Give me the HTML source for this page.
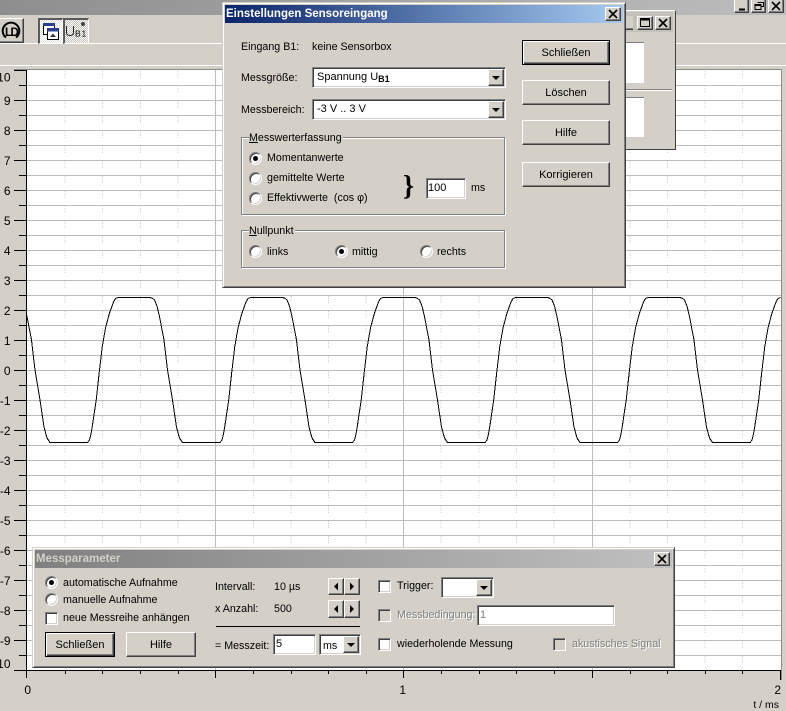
<!DOCTYPE html>
<html><head><meta charset="utf-8">
<style>
html,body{margin:0;padding:0;width:786px;height:711px;overflow:hidden;background:#d4d0c8}
body{position:relative;font-family:"Liberation Sans",sans-serif;font-size:10.7px;color:#000}
.a,.t,.b,.s,.r,.c,.x{position:absolute;box-sizing:border-box}
.t{line-height:14px;white-space:nowrap}
.d{color:#808080;text-shadow:1px 1px 0 #fff}
.b{background:#d4d0c8;border:1px solid;border-color:#fff #404040 #404040 #fff;box-shadow:inset -1px -1px 0 #808080;text-align:center;font-size:11px}
.b.def{border:1px solid #000;box-shadow:inset 1px 1px 0 #fff,inset -1px -1px 0 #404040,inset -2px -2px 0 #808080}
.b span{position:absolute;left:0;right:0;top:50%;margin-top:-7px;line-height:14px}
.s{background:#fff;border:1px solid;border-color:#808080 #fff #fff #808080;box-shadow:inset 1px 1px 0 #404040,inset -1px -1px 0 #d4d0c8}
.r{width:13px;height:13px;border-radius:50%;border:1px solid;border-color:#808080 #fff #fff #808080;background:#fff;box-shadow:inset 1px 1px 0 #404040,inset -1px -1px 0 #d4d0c8}
.r.on{background:radial-gradient(circle at 50% 50%,#000 0 2.2px,#fff 2.8px)}
.c{width:13px;height:13px;border:1px solid;border-color:#808080 #fff #fff #808080;background:#fff;box-shadow:inset 1px 1px 0 #404040,inset -1px -1px 0 #d4d0c8}
.c.dis{background:#d4d0c8}
.g{position:absolute;box-sizing:border-box;border:1px solid #808080;box-shadow:1px 1px 0 #fff,inset 1px 1px 0 #fff}
.l{position:absolute;top:-6px;left:7px;background:#d4d0c8;line-height:12px;padding:0 1px 0 0;white-space:nowrap}
.x svg,.ar svg{position:absolute;left:0;top:0}
.x{background:#d4d0c8;border:1px solid;border-color:#fff #404040 #404040 #fff;box-shadow:inset -1px -1px 0 #808080}
</style></head><body>

<!-- top window strip -->
<div class="a" style="left:0;top:0;width:786px;height:15px;background:linear-gradient(90deg,#8e8e8e,#bdbdbd)"></div>
<div class="a" style="left:0;top:43px;width:786px;height:1px;background:#fff"></div>
<div class="a" style="left:0;top:65px;width:786px;height:1px;background:#fff"></div>

<!-- chart -->
<svg class="a" style="left:0;top:0" width="786" height="711" viewBox="0 0 786 711" shape-rendering="crispEdges">
<defs>
<path id="wave" d="M0 297.5L31.5 297.5L34 298L36.500 300L39 306L41.500 316.700L46 340L49.500 370L54.500 400L58.500 427L61.500 438L64.500 442.500L102 442.500L104 440L105.500 434L106.700 427L110.700 400L114 370L116.700 347L120 328L124 313L128 302L130 298.500L132.500 297.500" fill="none" stroke="#000" stroke-width="1"/>
<clipPath id="cc"><rect x="27" y="70" width="754" height="600"/></clipPath>
</defs>
<rect x="26.5" y="69" width="755.5" height="601" fill="#fff"/>
<path d="M14 69.5H782M781.5 69V680" stroke="#8a8a8a" fill="none"/>
<g stroke="#d0cdc6" stroke-dasharray="1 1 1 1 1 1 1 8">
<path d="M65 71V670M102.500 71V670M140.500 71V670M178 71V670M253.500 71V670M291 71V670M328.500 71V670M366 71V670M441 71V670M479 71V670M516.500 71V670M554 71V670M630 71V670M667.500 71V670M705 71V670M742.500 71V670"/>
</g>
<path stroke="#bdbdbd" fill="none" d="M215.500 70V670M403.500 70V670M592.500 70V670M27 85.500H781M27 100.500H781M27 115.500H781M27 130.500H781M27 145.500H781M27 160.500H781M27 175.500H781M27 190.500H781M27 205.500H781M27 220.500H781M27 235.500H781M27 250.500H781M27 265.500H781M27 280.500H781M27 295.500H781M27 310.500H781M27 325.500H781M27 340.500H781M27 355.500H781M27 370.500H781M27 385.500H781M27 400.500H781M27 415.500H781M27 430.500H781M27 445.500H781M27 460.500H781M27 475.500H781M27 490.500H781M27 505.500H781M27 520.500H781M27 535.500H781M27 550.500H781M27 565.500H781M27 580.500H781M27 595.500H781M27 610.500H781M27 625.500H781M27 640.500H781M27 655.500H781"/>
<g clip-path="url(#cc)">
<use href="#wave" x="-14.500"/><use href="#wave" x="118"/><use href="#wave" x="250.500"/><use href="#wave" x="383"/><use href="#wave" x="515.500"/><use href="#wave" x="648"/>
</g>
<path stroke="#000" fill="none" d="M26.500 70V678M14 70.500H26M19 85.500H26M14 100.500H26M19 115.500H26M14 130.500H26M19 145.500H26M14 160.500H26M19 175.500H26M14 190.500H26M19 205.500H26M14 220.500H26M19 235.500H26M14 250.500H26M19 265.500H26M14 280.500H26M19 295.500H26M14 310.500H26M19 325.500H26M14 340.500H26M19 355.500H26M14 370.500H26M19 385.500H26M14 400.500H26M19 415.500H26M14 430.500H26M19 445.500H26M14 460.500H26M19 475.500H26M14 490.500H26M19 505.500H26M14 520.500H26M19 535.500H26M14 550.500H26M19 565.500H26M14 580.500H26M19 595.500H26M14 610.500H26M19 625.500H26M14 640.500H26M19 655.500H26M14 670.500H26
M27 670.500H781M65.500 670V674M102.500 670V674M140.500 670V674M178.500 670V674M215.500 670V678M253.500 670V674M291.500 670V674M328.500 670V674M366.500 670V674M403.500 670V678M441.500 670V674M479.500 670V674M516.500 670V674M554.500 670V674M592.500 670V678M630.500 670V674M667.500 670V674M705.500 670V674M742.500 670V674M780.500 670V680"/>
<g font-family="Liberation Sans,sans-serif" font-size="12" text-anchor="end" fill="#000" shape-rendering="auto">
<text x="10.500" y="81.500">10</text><text x="10.500" y="105">9</text><text x="10.500" y="135">8</text><text x="10.500" y="165">7</text><text x="10.500" y="195">6</text><text x="10.500" y="225">5</text><text x="10.500" y="255">4</text><text x="10.500" y="285">3</text><text x="10.500" y="315">2</text><text x="10.500" y="345">1</text><text x="10.500" y="375">0</text><text x="10.500" y="405">-1</text><text x="10.500" y="435">-2</text><text x="10.500" y="465">-3</text><text x="10.500" y="495">-4</text><text x="10.500" y="525">-5</text><text x="10.500" y="555">-6</text><text x="10.500" y="585">-7</text><text x="10.500" y="615">-8</text><text x="10.500" y="645">-9</text><text x="10.500" y="668">10</text>
<text x="31" y="694">0</text><text x="406" y="694">1</text><text x="781" y="694">2</text>
<text x="779" y="708" font-size="10.500">t / ms</text>
</g>
</svg>

<!-- window buttons -->
<div class="x" style="left:734px;top:-3px;width:15px;height:16px"><svg width="13" height="14"><path d="M4 11.500H10" stroke="#000" stroke-width="2"/></svg></div>
<div class="x" style="left:751px;top:-3px;width:15px;height:16px"><svg width="13" height="14"><path d="M5.500 4.500H11.500V8.500H9M3 6.500H9V11.500H3ZM3 7.500H9" fill="none" stroke="#000"/></svg></div>
<div class="x" style="left:768px;top:-3px;width:16px;height:16px"><svg width="14" height="14"><path d="M3 4L11 12M11 4L3 12" stroke="#000" stroke-width="1.600"/></svg></div>

<!-- toolbar -->
<div class="a" style="left:-3px;top:18px;width:27px;height:25px;background:#d4d0c8;border:1px solid;border-color:#fff #404040 #404040 #fff;box-shadow:inset -1px -1px 0 #808080"></div>
<svg class="a" style="left:0;top:19px" width="23" height="23"><path d="M6 18.500A8.300 8.300 0 1 1 16 18.500" fill="none" stroke="#000" stroke-width="2"/><text x="5" y="17" font-family="Liberation Sans,sans-serif" font-weight="bold" font-size="11.500" fill="#000" letter-spacing="-1.500">LD</text></svg>
<div class="a" style="left:38px;top:18px;width:25px;height:26px;border-style:solid;border-width:2px 1px 1px 2px;border-color:#5a5a5a #fff #fff #5a5a5a;background:repeating-conic-gradient(#fff 0 25%,#e4e2dc 0 50%) 0 0/2px 2px"></div>
<div class="a" style="left:63px;top:18px;width:26px;height:26px;border-style:solid;border-width:2px 1px 1px 2px;border-color:#5a5a5a #fff #fff #5a5a5a;background:repeating-conic-gradient(#fff 0 25%,#c4c0b8 0 50%) 0 0/2px 2px"></div>
<svg class="a" style="left:42px;top:22px" width="19" height="19"><rect x="1.500" y="1.500" width="11" height="11" fill="#fff" stroke="#000"/><rect x="1" y="1" width="12" height="3" fill="#2a3f8f"/><rect x="5.500" y="6.500" width="11" height="11" fill="#fff" stroke="#000"/><rect x="5" y="6" width="12" height="3.500" fill="#2a3f8f"/><path d="M8 15L11 11.500L14 15Z" fill="#333"/></svg>
<svg class="a" style="left:64px;top:20px" width="24" height="20"><path d="M2.500 6V12.500Q2.500 15.500 6 15.500Q9.500 15.500 9.500 12.500V6" fill="none" stroke="#222"/><text x="11" y="16.500" font-family="Liberation Sans,sans-serif" font-size="8.500" fill="#000" letter-spacing="0.800">B1</text><circle cx="19" cy="4" r="2" fill="#444"/></svg>

<!-- window behind -->
<div class="a" style="left:615px;top:10px;width:61px;height:140px;background:#d4d0c8;border-top:1px solid #fff;border-right:1px solid #404040;border-bottom:1px solid #404040"></div>
<div class="a" style="left:615px;top:12px;width:58px;height:20px;background:#c4c1ba"></div>
<div class="a" style="left:622px;top:16px;width:11px;height:14px;background:#d4d0c8;border-bottom:1px solid #404040;box-shadow:inset 0 -1px 0 #808080"></div>
<div class="x" style="left:637px;top:16px;width:16px;height:14px"><svg width="14" height="12"><rect x="2.500" y="1.500" width="9" height="8" fill="none" stroke="#000"/><path d="M2 2.500H12" stroke="#000" stroke-width="2"/></svg></div>
<div class="x" style="left:655px;top:16px;width:16px;height:14px"><svg width="14" height="12"><path d="M3 2L11 10M11 2L3 10" stroke="#000" stroke-width="1.600"/></svg></div>
<div class="a" style="left:615px;top:42px;width:29px;height:41px;background:#fff;border-top:1px solid #808080"></div>
<div class="a" style="left:615px;top:89px;width:57px;height:1px;background:#808080;box-shadow:0 1px 0 #fff"></div>
<div class="a" style="left:615px;top:97px;width:29px;height:40px;background:#fff;border-top:1px solid #808080"></div>

<!-- main dialog -->
<div class="a" style="left:222px;top:2px;width:404px;height:286px;background:#d4d0c8;border:1px solid;border-color:#d4d0c8 #404040 #404040 #d4d0c8;box-shadow:inset 1px 1px 0 #fff,inset -1px -1px 0 #808080"></div>
<div class="a" style="left:225px;top:5px;width:398px;height:18px;background:linear-gradient(90deg,#0a246a,#a6caf0)"></div>
<div class="t" style="left:226px;top:7px;color:#fff;font-weight:bold;font-size:11.500px">Einstellungen Sensoreingang</div>
<div class="x" style="left:605px;top:7px;width:16px;height:14px"><svg width="14" height="12"><path d="M3 2L11 10M11 2L3 10" stroke="#000" stroke-width="1.600"/></svg></div>

<div class="t" style="left:241px;top:40px">Eingang B1:</div>
<div class="t" style="left:312px;top:40px">keine Sensorbox</div>
<div class="t" style="left:241px;top:71px">Messgröße:</div>
<div class="t" style="left:241px;top:103px">Messbereich:</div>

<div class="s" style="left:312px;top:67px;width:194px;height:21px"></div>
<div class="t" style="left:317px;top:70px;font-size:11px">Spannung U<span style="font-size:9px;font-weight:bold;position:relative;top:2px">B1</span></div>
<div class="x" style="left:488px;top:69px;width:16px;height:17px"><svg width="14" height="15"><path d="M3 6H11L7 10Z" fill="#000"/></svg></div>
<div class="s" style="left:312px;top:99px;width:194px;height:21px"></div>
<div class="t" style="left:317px;top:102px;font-size:11px">-3 V .. 3 V</div>
<div class="x" style="left:488px;top:101px;width:16px;height:17px"><svg width="14" height="15"><path d="M3 6H11L7 10Z" fill="#000"/></svg></div>

<div class="g" style="left:241px;top:137px;width:264px;height:78px"><div class="l"><u>M</u>esswerterfassung</div></div>
<div class="r on" style="left:249px;top:152px"></div><div class="t" style="left:267px;top:151px">Momentanwerte</div>
<div class="r" style="left:249px;top:172px"></div><div class="t" style="left:267px;top:171px">gemittelte Werte</div>
<div class="r" style="left:249px;top:192px"></div><div class="t" style="left:267px;top:191px">Effektivwerte&nbsp; (cos φ)</div>
<div class="t" style="left:403px;top:173px;font:bold 28px/27px 'Liberation Serif',serif">}</div>
<div class="s" style="left:426px;top:178px;width:40px;height:21px"></div>
<div class="t" style="left:428px;top:181px;font-size:11px">100</div>
<div class="t" style="left:471px;top:181px">ms</div>

<div class="g" style="left:241px;top:230px;width:264px;height:38px"><div class="l"><u>N</u>ullpunkt</div></div>
<div class="r" style="left:249px;top:245px"></div><div class="t" style="left:267px;top:245px">links</div>
<div class="r on" style="left:335px;top:245px"></div><div class="t" style="left:352px;top:245px">mittig</div>
<div class="r" style="left:420px;top:245px"></div><div class="t" style="left:437px;top:245px">rechts</div>

<div class="b def" style="left:522px;top:40px;width:88px;height:25px"><span>Schließen</span></div>
<div class="b" style="left:522px;top:80px;width:88px;height:25px"><span>Löschen</span></div>
<div class="b" style="left:522px;top:120px;width:88px;height:25px"><span>Hilfe</span></div>
<div class="b" style="left:522px;top:162px;width:88px;height:25px"><span>Korrigieren</span></div>

<!-- Messparameter -->
<div class="a" style="left:32px;top:547px;width:643px;height:121px;background:#d4d0c8;border:1px solid;border-color:#d4d0c8 #404040 #404040 #d4d0c8;box-shadow:inset 1px 1px 0 #fff,inset -1px -1px 0 #808080"></div>
<div class="a" style="left:35px;top:550px;width:637px;height:18px;background:linear-gradient(90deg,#808080,#c0c0c0)"></div>
<div class="t" style="left:36px;top:552px;color:#d4d0c8;font-weight:bold;font-size:11.500px">Messparameter</div>
<div class="x" style="left:654px;top:552px;width:16px;height:14px"><svg width="14" height="12"><path d="M3 2L11 10M11 2L3 10" stroke="#000" stroke-width="1.600"/></svg></div>

<div class="r on" style="left:45px;top:576px"></div><div class="t" style="left:63px;top:576px">automatische Aufnahme</div>
<div class="r" style="left:45px;top:593px"></div><div class="t" style="left:63px;top:593px">manuelle Aufnahme</div>
<div class="c" style="left:45px;top:612px"></div><div class="t" style="left:63px;top:611px">neue Messreihe anhängen</div>
<div class="b def" style="left:45px;top:632px;width:70px;height:25px"><span>Schließen</span></div>
<div class="b" style="left:126px;top:632px;width:70px;height:25px"><span>Hilfe</span></div>

<div class="t" style="left:215px;top:580px">Intervall:</div><div class="t" style="left:274px;top:580px">10 µs</div>
<div class="t" style="left:215px;top:602px">x Anzahl:</div><div class="t" style="left:274px;top:602px">500</div>
<div class="x" style="left:328px;top:578px;width:16px;height:17px"><svg width="14" height="15"><path d="M9 3.500V11.500L5 7.500Z" fill="#000"/></svg></div>
<div class="x" style="left:344px;top:578px;width:16px;height:17px"><svg width="14" height="15"><path d="M5 3.500V11.500L9 7.500Z" fill="#000"/></svg></div>
<div class="x" style="left:328px;top:600px;width:16px;height:18px"><svg width="14" height="16"><path d="M9 4V12L5 8Z" fill="#000"/></svg></div>
<div class="x" style="left:344px;top:600px;width:16px;height:18px"><svg width="14" height="16"><path d="M5 4V12L9 8Z" fill="#000"/></svg></div>
<div class="a" style="left:216px;top:626px;width:144px;height:1px;background:#000"></div>
<div class="t" style="left:215px;top:639px">= Messzeit:</div>
<div class="s" style="left:273px;top:634px;width:43px;height:21px"></div>
<div class="t" style="left:276px;top:637px;font-size:11px">5</div>
<div class="s" style="left:319px;top:634px;width:42px;height:21px"></div>
<div class="t" style="left:323px;top:639px">ms</div>
<div class="x" style="left:343px;top:636px;width:16px;height:17px"><svg width="14" height="15"><path d="M3 6H11L7 10Z" fill="#000"/></svg></div>

<div class="c" style="left:378px;top:580px"></div><div class="t" style="left:397px;top:579px">Trigger:</div>
<div class="s" style="left:441px;top:577px;width:53px;height:21px"></div>
<div class="x" style="left:476px;top:579px;width:16px;height:17px"><svg width="14" height="15"><path d="M3 6H11L7 10Z" fill="#000"/></svg></div>
<div class="c dis" style="left:378px;top:609px"></div><div class="t d" style="left:397px;top:608px">Messbedingung:</div>
<div class="s" style="left:477px;top:605px;width:138px;height:21px"></div>
<div class="t" style="left:480px;top:608px;color:#808080;font-size:11px">1</div>
<div class="c" style="left:378px;top:638px"></div><div class="t" style="left:397px;top:637px">wiederholende Messung</div>
<div class="c dis" style="left:553px;top:638px"></div><div class="t d" style="left:572px;top:637px">akustisches Signal</div>

</body></html>
